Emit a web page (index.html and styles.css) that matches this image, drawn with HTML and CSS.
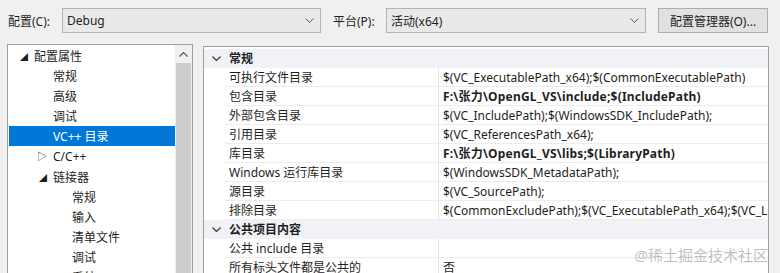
FILE: index.html
```html
<!DOCTYPE html>
<html lang="zh-CN">
<head>
    <meta charset="utf-8">
    <title>属性页</title>
    <link rel="stylesheet" href="styles.css">
</head>
<body>
    <div class="toolbar">
        <label class="lbl">配置(C):</label>
        <div class="combo combo-config">
            <span>Debug</span>
            <svg class="drop" width="9" height="5" viewBox="0 0 9 5"><polyline points="0.5,0.5 4.5,4.5 8.5,0.5" fill="none" stroke="#606060" stroke-width="1"/></svg>
        </div>
        <label class="lbl lbl-platform">平台(P):</label>
        <div class="combo combo-platform">
            <span>活动(x64)</span>
            <svg class="drop" width="9" height="5" viewBox="0 0 9 5"><polyline points="0.5,0.5 4.5,4.5 8.5,0.5" fill="none" stroke="#606060" stroke-width="1"/></svg>
        </div>
        <button class="btn">配置管理器(O)...</button>
    </div>

    <div class="main">
        <div class="tree">
            <div class="tree-list">
                <div class="node lv0"><span class="tw">◢</span>配置属性</div>
                <div class="node lv1">常规</div>
                <div class="node lv1">高级</div>
                <div class="node lv1">调试</div>
                <div class="node lv1 selected">VC++ 目录</div>
                <div class="node lv1"><span class="tw tw-closed">▷</span>C/C++</div>
                <div class="node lv1"><span class="tw">◢</span>链接器</div>
                <div class="node lv2">常规</div>
                <div class="node lv2">输入</div>
                <div class="node lv2">清单文件</div>
                <div class="node lv2">调试</div>
                <div class="node lv2">系统</div>
            </div>
            <div class="vscroll">
                <div class="arrow">
                    <svg width="9" height="5" viewBox="0 0 9 5"><polyline points="0.5,4.5 4.5,0.5 8.5,4.5" fill="none" stroke="#606060" stroke-width="1.3"/></svg>
                </div>
                <div class="thumb"></div>
            </div>
        </div>

        <div class="grid">
            <div class="row cat">
                <span class="chev"><svg width="9" height="5" viewBox="0 0 9 5"><polyline points="0.5,0.5 4.5,4.5 8.5,0.5" fill="none" stroke="#404040" stroke-width="1.3"/></svg></span>
                <span class="cat-name">常规</span>
            </div>
            <div class="row"><span class="name">可执行文件目录</span><span class="value">$(VC_ExecutablePath_x64);$(CommonExecutablePath)</span></div>
            <div class="row"><span class="name">包含目录</span><span class="value bold">F:\张力\OpenGL_VS\include;$(IncludePath)</span></div>
            <div class="row"><span class="name">外部包含目录</span><span class="value">$(VC_IncludePath);$(WindowsSDK_IncludePath);</span></div>
            <div class="row"><span class="name">引用目录</span><span class="value">$(VC_ReferencesPath_x64);</span></div>
            <div class="row"><span class="name">库目录</span><span class="value bold">F:\张力\OpenGL_VS\libs;$(LibraryPath)</span></div>
            <div class="row"><span class="name">Windows 运行库目录</span><span class="value">$(WindowsSDK_MetadataPath);</span></div>
            <div class="row"><span class="name">源目录</span><span class="value">$(VC_SourcePath);</span></div>
            <div class="row"><span class="name">排除目录</span><span class="value">$(CommonExcludePath);$(VC_ExecutablePath_x64);$(VC_LibraryPath_x64)</span></div>
            <div class="row cat">
                <span class="chev"><svg width="9" height="5" viewBox="0 0 9 5"><polyline points="0.5,0.5 4.5,4.5 8.5,0.5" fill="none" stroke="#404040" stroke-width="1.3"/></svg></span>
                <span class="cat-name">公共项目内容</span>
            </div>
            <div class="row"><span class="name">公共 include 目录</span><span class="value"></span></div>
            <div class="row"><span class="name">所有标头文件都是公共的</span><span class="value">否</span></div>
        </div>
    </div>

    <div class="watermark">@稀土掘金技术社区</div>
</body>
</html>
```

FILE: styles.css
```css
body {
    margin: 0;
    width: 780px;
    height: 273px;
    overflow: hidden;
    position: relative;
    background-color: #f0f0f0;
    color: #1e1e1e;
    font-family: "Noto Sans", "Noto Sans CJK SC", sans-serif;
    font-size: 12px;
}

.toolbar {
    display: flex;
    align-items: center;
    height: 25px;
    padding: 8px 0 11px 8px;
}

.lbl {
    width: 54px;
}

.lbl-platform {
    margin-left: 12px;
    width: 53px;
}

.combo {
    display: flex;
    align-items: center;
    justify-content: space-between;
    box-sizing: border-box;
    height: 25px;
    padding: 0 6px 0 4px;
    background-color: #e9e9e9;
    border: 1px solid #b4b4b4;
}

.combo-config {
    width: 259px;
}

.combo-platform {
    width: 260px;
}

.btn {
    box-sizing: border-box;
    height: 25px;
    width: 110px;
    margin-left: 12px;
    padding: 0;
    font: inherit;
    color: #1e1e1e;
    background-color: #e1e1e1;
    border: 1px solid #adadad;
}

.main {
    display: flex;
    align-items: flex-start;
    padding-left: 7px;
    gap: 10px;
}

.tree {
    display: flex;
    width: 186px;
    height: 240px;
    box-sizing: border-box;
    border: 1px solid #a0a0a0;
    border-bottom: none;
    background-color: #fff;
}

.tree-list {
    flex: 1;
    padding: 1px 0 0 1px;
}

.node {
    height: 20.1px;
    line-height: 21px;
    padding-left: 25px;
    position: relative;
    white-space: nowrap;
}

.node.lv1 {
    padding-left: 44px;
}

.node.lv2 {
    padding-left: 63px;
}

.node.selected {
    background-color: #0078d7;
    color: #fff;
}

.tw {
    position: absolute;
    font-size: 8px;
    color: #1e1e1e;
    margin-left: -14px;
}

.tw-closed {
    font-size: 10px;
    margin-left: -16px;
}

.vscroll {
    width: 17px;
    background-color: #f0f0f0;
}

.vscroll .arrow {
    height: 18px;
    display: flex;
    align-items: center;
    justify-content: center;
}

.vscroll .thumb {
    margin: 0 1px;
    height: 220px;
    background-color: #cdcdcd;
}

.grid {
    width: 566px;
    height: 240px;
    margin-top: 2px;
    padding-top: 2px;
    box-sizing: border-box;
    border: 1px solid #a0a0a0;
    border-bottom: none;
    background-color: #fff;
    overflow: hidden;
}

.row {
    display: flex;
    height: 19px;
    line-height: 20px;
    margin-left: 21px;
    border-bottom: 1px solid #ececec;
    box-sizing: border-box;
    white-space: nowrap;
}

.row.cat {
    margin-left: 0;
    background-color: #f0f2f7;
    border-bottom: none;
    font-weight: bold;
}

.chev {
    width: 25px;
    display: flex;
    align-items: center;
    justify-content: center;
}

.name {
    width: 214px;
    padding-left: 4px;
    box-sizing: border-box;
    border-right: 1px solid #e2e2e2;
    flex-shrink: 0;
}

.value {
    padding-left: 4px;
}

.bold {
    font-weight: bold;
    letter-spacing: 0.2px;
}

.watermark {
    position: absolute;
    right: 12px;
    bottom: 8px;
    font-size: 15px;
    color: rgba(150, 150, 150, 0.6);
}
```
